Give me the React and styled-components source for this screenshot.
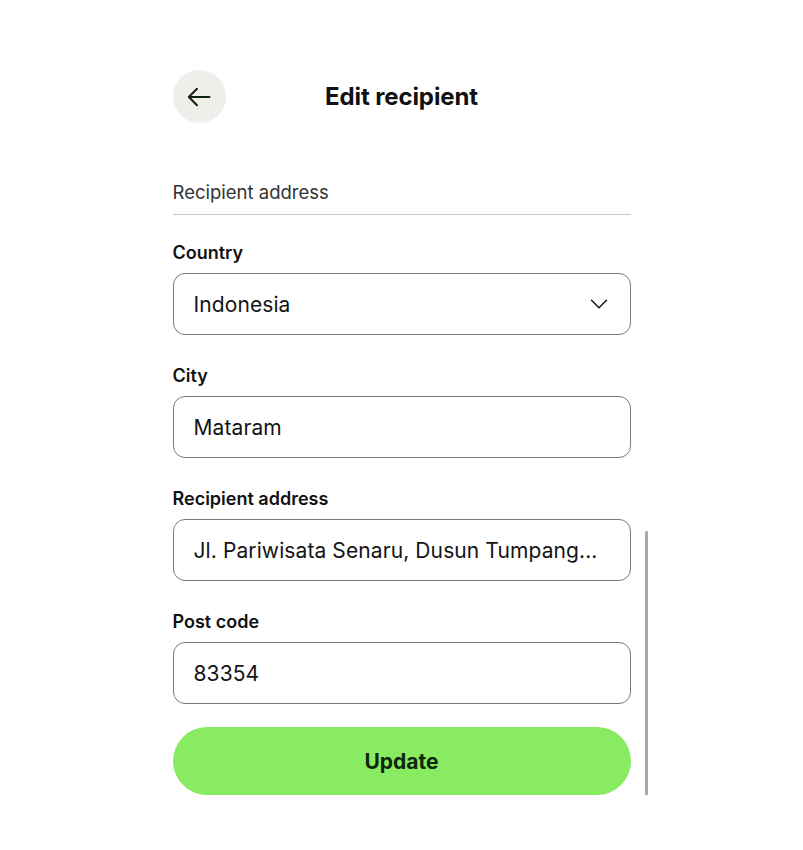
import styled, { createGlobalStyle } from "styled-components";
import { ChevronDown } from "lucide-react";

const GlobalStyle = createGlobalStyle`
    body {
        margin: 0;
        background: #ffffff;
        font-family: Inter, "Noto Sans", sans-serif;
        color: #111111;
    }
`;

const Page = styled.div`
    width: 458px;
    margin: 0 auto;
    padding-top: 70px;
    position: relative;
`;

const Header = styled.div`
    display: grid;
    grid-template-columns: 53px 1fr 53px;
    align-items: center;
    height: 53px;
    margin-bottom: 58px;
`;

const BackButton = styled.button`
    width: 53px;
    height: 53px;
    border-radius: 50%;
    border: 0;
    background: #eeefeb;
    display: flex;
    align-items: center;
    justify-content: center;
    padding: 0;
    color: #0f240c;
`;

const Title = styled.h1`
    margin: 0;
    text-align: center;
    font-size: 24px;
    font-weight: 700;
    letter-spacing: -0.1px;
`;

const Section = styled.div`
    font-size: 18.5px;
    line-height: 22px;
    color: #333333;
    padding-bottom: 11px;
    border-bottom: 1px solid #c8c8c8;
    margin-bottom: 27px;
`;

const Field = styled.div`
    display: flex;
    flex-direction: column;
    gap: 9px;
    margin-bottom: 30px;
`;

const Label = styled.label`
    font-size: 18px;
    line-height: 22px;
    font-weight: 600;
`;

const Box = styled.div`
    height: 62px;
    box-sizing: border-box;
    border: 1px solid #7a7a7a;
    border-radius: 12px;
    display: flex;
    align-items: center;
    justify-content: space-between;
    padding: 0 16px 0 20px;
    font-size: 21px;
    letter-spacing: 0.1px;
    color: #141414;
    white-space: nowrap;
`;

const Button = styled.button`
    width: 100%;
    height: 68px;
    margin-top: -7px;
    border: 0;
    border-radius: 34px;
    background: #89eb62;
    color: #0c2808;
    font-family: inherit;
    font-size: 21px;
    font-weight: 700;
`;

const Scrollbar = styled.div`
    position: absolute;
    right: -17px;
    top: 531px;
    width: 3px;
    height: 271px;
    background: #a9a9a9;
    border-radius: 1px;
`;

const fields = [
    { label: "Country", value: "Indonesia", select: true },
    { label: "City", value: "Mataram" },
    { label: "Recipient address", value: "Jl. Pariwisata Senaru, Dusun Tumpang..." },
    { label: "Post code", value: "83354" },
];

function App() {
    return (
        <Page>
            <GlobalStyle />
            <Header>
                <BackButton>
                    <svg width="24" height="20" viewBox="0 0 24 20" fill="none" stroke="currentColor" strokeWidth="2" strokeLinecap="round" strokeLinejoin="round">
                        <path d="M22.5 10H2M10 1.8 1.8 10 10 18.2" />
                    </svg>
                </BackButton>
                <Title>Edit recipient</Title>
                <span />
            </Header>
            <Section>Recipient address</Section>
            {fields.map(({ label, value, select }) => (
                <Field key={label}>
                    <Label>{label}</Label>
                    <Box>
                        {value}
                        {select ? <ChevronDown size={30} strokeWidth={1.2} /> : null}
                    </Box>
                </Field>
            ))}
            <Button>Update</Button>
            <Scrollbar />
        </Page>
    );
}

export default App;
